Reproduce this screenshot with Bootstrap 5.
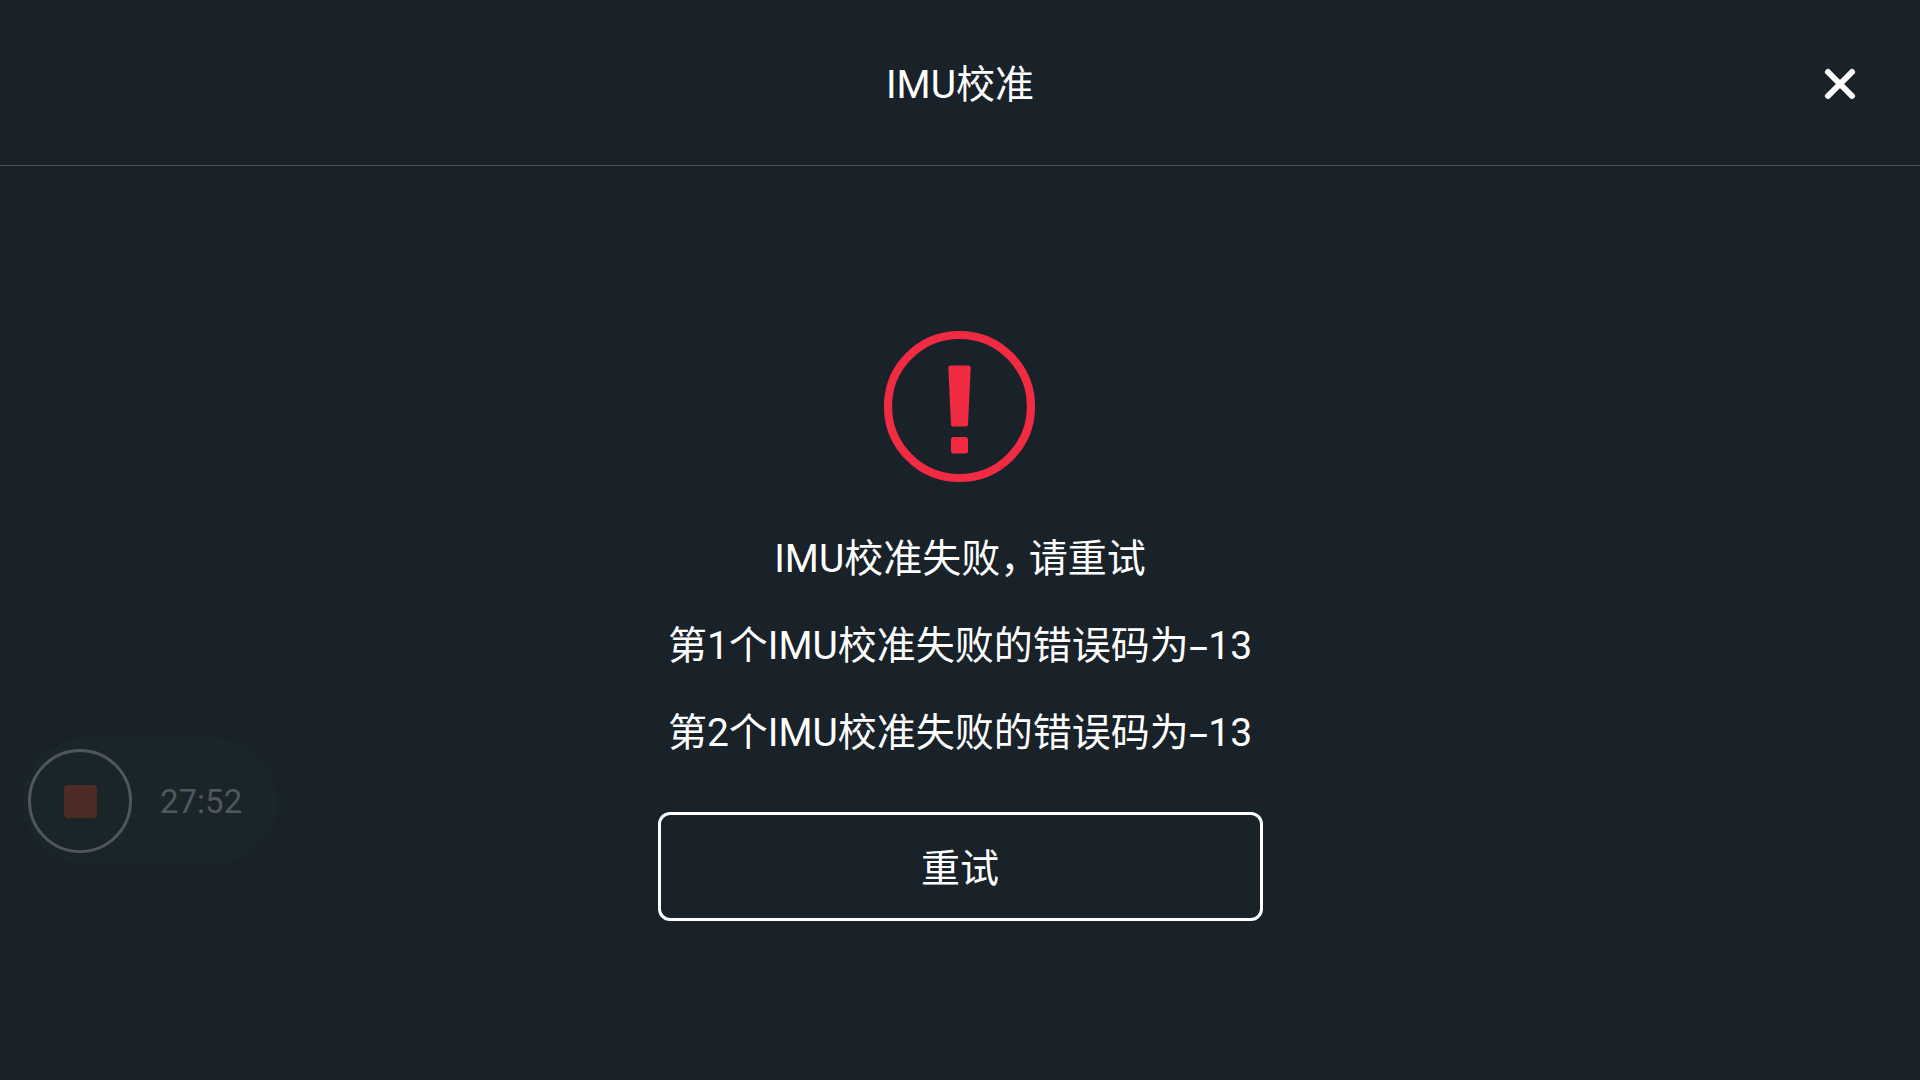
<!DOCTYPE html>
<html lang="zh-CN">
<head>
<meta charset="utf-8">
<meta name="viewport" content="width=device-width, initial-scale=1">
<title>IMU校准</title>
<link href="https://cdn.jsdelivr.net/npm/bootstrap@5.3.0/dist/css/bootstrap.min.css" rel="stylesheet">
<style>
  body { background: #192129; color: #fff; font-family: Roboto, "Noto Sans CJK SC", sans-serif; font-size: 39px; line-height: 58px; }
  .top-bar { display: grid; grid-template-columns: 1fr auto 1fr; height: 166px; padding: 2px 60px 0; border-bottom: 1px solid #4b5159; }
  .top-title { font-size: 39px; line-height: 58px; padding-top: 2px; }
  .close-btn { width: 40px; height: 40px; color: #fff; }
  .close-btn svg, .alert-icon { display: block; }
  .result { padding-top: 165px; }
  .messages { margin-top: 33px; }
  .messages p { line-height: 87px; }
  .comma { font-feature-settings: "halt"; margin-right: 9px; }
  .dash { font-family: "Noto Sans", sans-serif; line-height: 1; }
  .retry-btn { width: 605px; max-width: 100%; height: 109px; margin-top: 35px; border: 3px solid #fff; border-radius: 12px; color: #fff; font-size: 39px; line-height: 58px; }
  .retry-btn:hover, .close-btn:hover { color: #fff; border-color: #fff; opacity: .8; }
  .recorder { left: 22px; top: 738px; height: 126px; padding: 0 36px 0 6px; gap: 28px; background: #1a252a; color: #50575d; font-size: 33px; line-height: 40px; }
  .recorder time { padding-top: 2px; }
  .stop-btn { width: 104px; height: 104px; border: 3px solid #50565f; }
  .stop-mark { width: 33px; height: 33px; border-radius: 4px; background: #4f2b25; }
</style>
<script src="https://cdn.jsdelivr.net/npm/bootstrap@5.3.0/dist/js/bootstrap.bundle.min.js" defer></script>
</head>
<body class="min-vh-100 position-relative">
<header class="top-bar align-items-center">
  <span></span>
  <h1 class="top-title fw-normal mb-0">IMU校准</h1>
  <button type="button" class="close-btn btn border-0 p-0 ms-auto" aria-label="关闭">
    <svg width="40" height="40" viewBox="0 0 40 40" fill="none" stroke="currentColor" stroke-width="6" stroke-linecap="round"><path d="M8 8 32 32M32 8 8 32"/></svg>
  </button>
</header>

<main class="result d-flex flex-column align-items-center text-center">
  <svg class="alert-icon" width="152" height="152" viewBox="0 0 152 152" fill="#f02b42" aria-hidden="true">
    <circle cx="75.500" cy="75.500" r="71.500" fill="none" stroke="#f02b42" stroke-width="8.200"/>
    <path d="M66.500 34.500h18q2.300 0 2.200 2.300L84 93.500q0 2-2 2h-13q-2 0-2-2L64.300 36.800q-.1-2.300 2.200-2.300z"/>
    <rect x="67" y="106" width="17" height="16.500" rx="2.500"/>
  </svg>
  <div class="messages" role="alert">
    <p class="m-0">IMU校准失败<span class="comma">，</span>请重试</p>
    <p class="m-0">第1个IMU校准失败的错误码为<span class="dash">–</span>13</p>
    <p class="m-0">第2个IMU校准失败的错误码为<span class="dash">–</span>13</p>
  </div>
  <button type="button" class="retry-btn btn px-0 pb-0 pt-1">重试</button>
</main>

<!-- Floating screen recorder -->
<aside class="recorder position-absolute d-flex align-items-center rounded-pill">
  <button type="button" class="stop-btn btn rounded-circle p-0 d-flex align-items-center justify-content-center" aria-label="停止录制"><span class="stop-mark"></span></button>
  <time>27:52</time>
</aside>
</body>
</html>
